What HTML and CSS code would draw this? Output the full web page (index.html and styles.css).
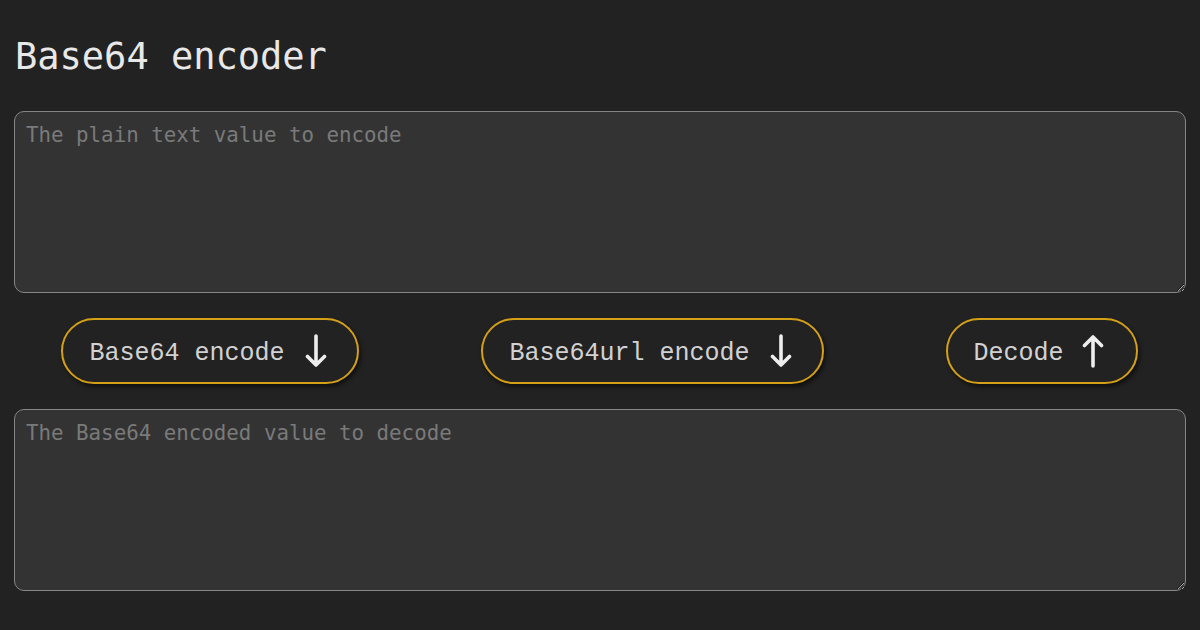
FILE: index.html
```html
<!DOCTYPE html>
<html lang="en">
<head>
<meta charset="utf-8">
<title>Base64 encoder</title>
<link rel="stylesheet" href="styles.css">
</head>
<body>
<main class="page">
  <h1 class="title">Base64 encoder</h1>
  <textarea class="field" placeholder="The plain text value to encode"></textarea>
  <div class="actions">
    <button class="btn" type="button"><span class="btn-label">Base64 encode</span>
      <svg class="arrow" viewBox="0 0 22 34" width="22" height="34"><path d="M11 2 V31 M2.5 22.5 L11 31 L19.5 22.5" fill="none" stroke="currentColor" stroke-width="3.6" stroke-linecap="round" stroke-linejoin="round"/></svg>
    </button>
    <button class="btn" type="button"><span class="btn-label">Base64url encode</span>
      <svg class="arrow" viewBox="0 0 22 34" width="22" height="34"><path d="M11 2 V31 M2.5 22.5 L11 31 L19.5 22.5" fill="none" stroke="currentColor" stroke-width="3.6" stroke-linecap="round" stroke-linejoin="round"/></svg>
    </button>
    <button class="btn btn-decode" type="button"><span class="btn-label">Decode</span>
      <svg class="arrow" viewBox="0 0 22 34" width="22" height="34"><path d="M11 32 V3 M2.5 11.5 L11 3 L19.5 11.5" fill="none" stroke="currentColor" stroke-width="3.6" stroke-linecap="round" stroke-linejoin="round"/></svg>
    </button>
  </div>
  <textarea class="field" placeholder="The Base64 encoded value to decode"></textarea>
</main>
</body>
</html>
```

FILE: styles.css
```css
html, body {
  margin: 0;
  padding: 0;
  background: #222222;
}

.page {
  padding: 35px 14px 0;
  font-family: "DejaVu Sans Mono", monospace;
  color: #e6e6e6;
}

.title {
  margin: 0 0 32px 1px;
  font-family: "DejaVu Sans Mono", monospace;
  font-weight: normal;
  font-size: 37px;
  line-height: 44px;
  color: #e8e8e8;
}

.field {
  display: block;
  box-sizing: border-box;
  width: 100%;
  height: 182px;
  margin: 0;
  padding: 11px 11px 10px;
  background: #333333;
  border: 1px solid #858585;
  border-radius: 10px;
  color: #e6e6e6;
  font-family: "DejaVu Sans Mono", monospace;
  font-size: 20.8px;
  line-height: 24px;
  outline: none;
}

.field::placeholder {
  color: #7a7a7a;
}

.actions {
  display: flex;
  justify-content: space-around;
  align-items: center;
  margin: 25px -14px;
}

.btn {
  display: flex;
  align-items: center;
  gap: 20px;
  box-sizing: border-box;
  height: 66px;
  padding: 0 30px 0 26px;
  background: #222222;
  border: 2px solid #d4a017;
  border-radius: 33px;
  box-shadow: 2px 3px 4px rgba(0, 0, 0, 0.55);
  color: #d2d2d2;
  font-family: "Liberation Mono", monospace;
  font-size: 25px;
  cursor: pointer;
}

.btn-decode {
  padding-left: 25px;
  padding-right: 32px;
  gap: 19px;
}

.btn-label {
  line-height: 30px;
  padding-top: 5px;
}

.arrow {
  display: block;
  color: #eeeeee;
}
```
